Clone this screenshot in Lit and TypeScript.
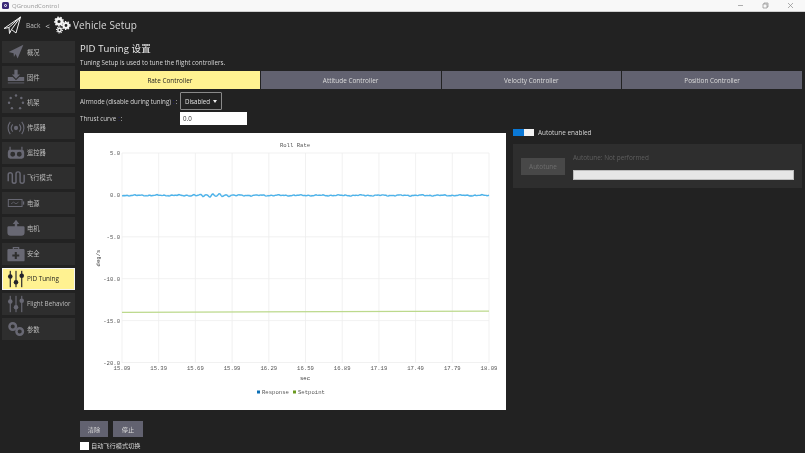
import { LitElement, html, css, svg } from "lit";
import { customElement } from "lit/decorators.js";

function blueLine(): string {
  const pts: string[] = [];
  for (let px = 38; px <= 405; px += 1) {
    const t = px - 38;
    let v = 0.55 * Math.sin(t * 0.31) + 0.5 * Math.sin(t * 0.83 + 1) + 0.35 * Math.sin(t * 1.7 + 2);
    const burst = Math.exp(-Math.pow((px - 128) / 16, 2));
    v = v * 0.75 + burst * 2.1 * Math.sin(t * 0.95);
    pts.push(`${px},${(62.4 + v * 0.8).toFixed(2)}`);
  }
  return pts.join(" ");
}

const XL = ["15.09", "15.39", "15.69", "15.99", "16.29", "16.59", "16.89", "17.19", "17.49", "17.79", "18.09"];
const YL = ["5.0", "0.0", "-5.0", "-10.0", "-15.0", "-20.0"];

const ICONS: Record<string, unknown> = {
  plane: svg`<path d="M2 11 L20 2 L13 19 L10.5 13.5 L8.5 17 L8 12.5 Z"/>`,
  firmware: svg`<path d="M9 2h4v6h3l-5 5-5-5h3z"/><path d="M1 11h6l4 4 4-4h6v5H1z"/><path d="M1 17.500h20v1.400H1z" opacity=".7"/>`,
  airframe: svg`<g><circle cx="11" cy="3" r="1.500"/><circle cx="17.500" cy="6" r="1.500"/><circle cx="19.500" cy="12" r="1.500"/><circle cx="16" cy="18.500" r="1.500"/><circle cx="6" cy="18.500" r="1.500"/><circle cx="2.500" cy="12" r="1.500"/><circle cx="4.500" cy="6" r="1.500"/></g>`,
  sensors: svg`<circle cx="11" cy="11" r="2.6"/><g fill="none" stroke="currentColor" stroke-width="1.4"><path d="M7 6.5a7 7 0 0 0 0 9M15 6.5a7 7 0 0 1 0 9"/><path d="M4 3.5a12 12 0 0 0 0 15M18 3.5a12 12 0 0 1 0 15"/></g>`,
  rc: svg`<path fill-rule="evenodd" d="M4 7h14a3 3 0 0 1 3 3v5a3 3 0 0 1-3 3H4a3 3 0 0 1-3-3v-5a3 3 0 0 1 3-3zM7 9.5a3 3 0 1 0 0 6 3 3 0 0 0 0-6zM15 9.5a3 3 0 1 0 0 6 3 3 0 0 0 0-6z"/><path d="M3 3.5h1.5v4H3zM17.5 3.5H19v4h-1.500z"/>`,
  modes: svg`<path fill="none" stroke="currentColor" stroke-width="1.8" d="M1.500 15V7a2.500 2.500 0 0 1 5 0v9a2.500 2.500 0 0 0 4.500 0V6a2.500 2.500 0 0 1 5 0v9a2.500 2.500 0 0 0 5 0V7"/>`,
  battery: svg`<path fill-rule="evenodd" d="M1 6h18v10H1zM2.200 7.200v7.600h15.600V7.200z"/><path d="M19.500 9H21v4h-1.500z"/><path fill="none" stroke="currentColor" stroke-width=".9" d="M5 12l3-2 3 2 3-2"/>`,
  motor: svg`<path d="M11 1l4 5h-2.500v3H20a1.500 1.500 0 0 1 1.500 1.500v6a4 4 0 0 1-4 4h-13a4 4 0 0 1-4-4v-6A1.500 1.500 0 0 1 2 9h7.500V6H7z"/>`,
  safety: svg`<path fill-rule="evenodd" d="M7 5V2.500h8V5h5a1.500 1.500 0 0 1 1.500 1.500v12A1.500 1.500 0 0 1 20 20H2a1.500 1.500 0 0 1-1.500-1.500v-12A1.500 1.500 0 0 1 2 5zM8.500 5h5V4h-5zM9.500 8.500v3h-3v2.500h3v3H12v-3h3v-2.500h-3v-3z"/>`,
  sliders: svg`<g><rect x="3.300" y="1" width="1.400" height="20"/><rect x="10.300" y="1" width="1.400" height="20"/><rect x="17.300" y="1" width="1.400" height="20"/><circle cx="4" cy="8" r="2.800"/><circle cx="11" cy="15" r="2.800"/><circle cx="18" cy="7" r="2.800"/></g>`,
  params: svg`<g fill="none" stroke="currentColor" stroke-width="3"><circle cx="7" cy="8" r="4"/><circle cx="15.500" cy="14" r="4"/></g>`,
};

const ITEMS = [
  ["plane", "概况"], ["firmware", "固件"], ["airframe", "机架"], ["sensors", "传感器"],
  ["rc", "遥控器"], ["modes", "飞行模式"], ["battery", "电源"], ["motor", "电机"],
  ["safety", "安全"], ["sliders", "PID Tuning"], ["sliders", "Flight Behavior"], ["params", "参数"],
];

@customElement("app-root")
export class AppRoot extends LitElement {
  static styles = css`
    :host { display: block; width: 805px; height: 453px; overflow: hidden; }
    * { box-sizing: border-box; }
    .app { width: 805px; height: 453px; background: #222222; color: #e4e4e4; display: flex; flex-direction: column;
      font-family: "Open Sans", "Noto Sans CJK SC", sans-serif; overflow: hidden; filter: blur(.3px); }
    .titlebar { height: 12px; background: #f8f8f8; display: flex; align-items: center; padding-left: 2px; gap: 3px;
      color: #9a9a9a; font-size: 6px; border-bottom: 1px solid #cfcfcf; flex: none; }
    .logo { width: 7px; height: 7px; background: #3b2a78; border-radius: 1.500px; display: flex; align-items: center; justify-content: center; }
    .logo i { width: 3px; height: 3px; border: 1px solid #fff; border-radius: 50%; }
    .winbtns { margin-left: auto; display: flex; gap: 18px; padding-right: 11px; align-items: center; }
    .winbtns svg { width: 7px; height: 7px; display: block; fill: none; stroke: #8c8c8c; stroke-width: .7; }
    .header { height: 26px; flex: none; display: flex; align-items: center; padding-left: 3px; color: #d8d8d8; }
    .header .plane { width: 19px; height: 19px; display: block; fill: none; stroke: #f0f0f0; stroke-width: 1; }
    .back { font-size: 6.500px; margin-left: 4px; color: #bdbdbd; }
    .lt { font-size: 8px; margin-left: 5px; }
    .gears { width: 18px; height: 18px; margin-left: 3px; display: block; }
    .vs { font-size: 10px; margin-left: 2px; letter-spacing: .1px; }
    .main { flex: 1; display: flex; min-height: 0; }
    .side { width: 80px; flex: none; padding: 3px 0 0 2px; display: flex; flex-direction: column; gap: 3.200px; }
    .item { width: 73px; height: 22px; flex: none; background: #2e2e2e; display: flex; align-items: center; padding-left: 4px;
      color: #bcbcbc; font-size: 6.300px; gap: 1px; white-space: nowrap; }
    .item svg { width: 20px; height: 18px; fill: #686873; color: #686873; flex: none; }
    .item.sel { background: #fff291; color: #1e1e1e; border: 1px solid #f4f4f4; padding-left: 3px; }
    .item.sel svg { fill: #23232b; color: #23232b; }
    .content { flex: 1; min-width: 0; display: flex; flex-direction: column; }
    h1 { margin: 3px 0 0; font-size: 9.500px; font-weight: 400; height: 15px; line-height: 15px; color: #e8e8e8; letter-spacing: .1px; }
    .desc { font-size: 6.250px; height: 10px; line-height: 10px; margin-top: 2px; color: #d8d8d8; }
    .tabs { display: flex; gap: 1px; width: 722px; height: 18px; margin-top: 3px; flex: none; }
    .tab { flex: 1; background: #626270; color: #dcdcdc; font-size: 6.400px; display: flex; align-items: center; justify-content: center; }
    .tab.sel { background: #fff291; color: #222; }
    .lower { flex: 1; display: flex; gap: 7px; min-height: 0; }
    .left { width: 426px; flex: none; display: flex; flex-direction: column; padding-top: 3px; }
    .row { display: flex; align-items: center; font-size: 6.200px; color: #d4d4d4; }
    .row2 { margin-top: 2px; }
    .lbl { width: 100px; flex: none; white-space: nowrap; }
    .lbl b { color: #1a1a8a; font-weight: 400; margin: 0 1px 0 2px; }
    .select { width: 42px; height: 18px; border: 1px solid #8a8a8a; border-radius: 1px; background: #222; display: flex; align-items: center;
      justify-content: space-between; padding: 0 4px; color: #e0e0e0; }
    .caret { width: 0; height: 0; border: 2.500px solid transparent; border-top: 3px solid #eee; border-bottom: 0; }
    .input { width: 67px; height: 13px; background: #fff; color: #333; display: flex; align-items: center; padding-left: 3px; }
    .chart { width: 422px; height: 277px; margin: 8px 0 0 4px; background: #fff; flex: none; }
    .chart svg { display: block; width: 422px; height: 277px; font-family: "Liberation Mono", monospace; }
    .btns { display: flex; gap: 5px; margin-top: 11px; }
    .btn { height: 16px; background: #626270; color: #d6d6d6; font-size: 6.200px; display: flex; align-items: center; justify-content: center; }
    .btn.clear { width: 28px; }
    .btn.stop { width: 30px; }
    .check { display: flex; align-items: center; gap: 2px; margin-top: 4px; font-size: 6.200px; color: #d4d4d4; }
    .box { width: 9px; height: 8px; background: #fff; }
    .right { width: 289px; flex: none; display: flex; flex-direction: column; padding-top: 39px; }
    .toggle-row { display: flex; align-items: center; gap: 4px; font-size: 6.400px; color: #d4d4d4; height: 8px; }
    .toggle { width: 21px; height: 7px; display: flex; }
    .toggle i { flex: 1; background: #0a78d6; }
    .toggle u { flex: 1; background: #f2f2f2; }
    .panel { height: 44px; margin-top: 8px; background: #2e2e2e; display: flex; padding: 0 8px; gap: 8px; align-items: flex-start; }
    .auto { width: 44px; height: 17px; margin-top: 14px; background: #484848; color: #6e6e6e; font-size: 6.400px; display: flex; align-items: center; justify-content: center; flex: none; }
    .pcol { flex: 1; display: flex; flex-direction: column; }
    .status { font-size: 6.400px; color: #5f5f5f; height: 10px; line-height: 10px; margin-top: 9px; }
    .bar { height: 10px; margin-top: 7px; background: #e6e6e6; border: 1px solid #bdbdbd; }
  `;

  private chart() {
    const xs = XL.map((_, i) => 38 + (367 * i) / 10);
    const ys = YL.map((_, i) => 20 + 41.900 * i);
    return svg`<svg viewBox="0 0 422 277">
      <g stroke="#eeeeee" stroke-width=".8">
        ${xs.map((x) => svg`<line x1=${x} x2=${x} y1="20" y2="230"/>`)}
        ${ys.map((y) => svg`<line x1="38" x2="405" y1=${y} y2=${y}/>`)}
      </g>
      <g fill="#555" font-size="5.600">
        ${YL.map((l, i) => svg`<text x="36" y=${ys[i] + 2} text-anchor="end">${l}</text>`)}
        ${XL.map((l, i) => svg`<text x=${xs[i]} y="237" text-anchor="middle">${l}</text>`)}
        <text x="211" y="14" text-anchor="middle">Roll Rate</text>
        <text x="221" y="246.500" text-anchor="middle" fill="#333">sec</text>
        <text transform="translate(15.500 125) rotate(-90)" text-anchor="middle" fill="#333">deg/s</text>
        <rect x="173" y="257.500" width="3" height="3" fill="#0b6fb5"/>
        <text x="178" y="261">Response</text>
        <rect x="209" y="257.500" width="3" height="3" fill="#6a9a1f"/>
        <text x="214" y="261">Setpoint</text>
      </g>
      <polyline points=${blueLine()} fill="none" stroke="#4db3ea" stroke-width="1.400"/>
      <path d="M38 179.300 C120 180 220 178.800 405 178.200" fill="none" stroke="#bcd98c" stroke-width="1.300"/>
    </svg>`;
  }

  render() {
    return html`<div class="app">
      <div class="titlebar">
        <span class="logo"><i></i></span><span>QGroundControl</span>
        <div class="winbtns">
          <svg viewBox="0 0 7 7"><path d="M1 3.500h5"/></svg>
          <svg viewBox="0 0 7 7"><path d="M1 2h4v4H1zM2 2V1h4v4H5"/></svg>
          <svg viewBox="0 0 7 7"><path d="M1 1l5 5M6 1l-5 5"/></svg>
        </div>
      </div>
      <div class="header">
        <svg class="plane" viewBox="0 0 19 19"><path d="M1 12.500 L17.500 1 L13 17 L8.500 13.500 L6.500 17.500 L6 11.500 Z M6 11.500 L17.500 1 M8.500 13.500 L17.500 1"/></svg>
        <span class="back">Back</span><span class="lt">&lt;</span>
        <svg class="gears" viewBox="0 0 18 18" fill="none" stroke="#f4f4f4">
          <circle cx="6" cy="5.500" r="2.800" stroke-width="2.400"/>
          <circle cx="6" cy="5.500" r="4.300" stroke-width="1.500" stroke-dasharray="1.500 1.500"/>
          <circle cx="13" cy="9.500" r="2.500" stroke-width="2.200"/>
          <circle cx="13" cy="9.500" r="3.900" stroke-width="1.400" stroke-dasharray="1.400 1.400"/>
          <circle cx="6.500" cy="14" r="1.700" stroke-width="1.500"/>
          <circle cx="6.500" cy="14" r="2.900" stroke-width="1.100" stroke-dasharray="1.100 1.100"/>
        </svg>
        <span class="vs">Vehicle Setup</span>
      </div>
      <div class="main">
        <div class="side">
          ${ITEMS.map(([ic, t]) => html`<div class="item ${t === "PID Tuning" ? "sel" : ""}">
            <svg viewBox="0 0 22 22">${ICONS[ic]}</svg><span>${t}</span></div>`)}
        </div>
        <div class="content">
          <h1>PID Tuning 设置</h1>
          <div class="desc">Tuning Setup is used to tune the flight controllers.</div>
          <div class="tabs">
            <div class="tab sel">Rate Controller</div>
            <div class="tab">Attitude Controller</div>
            <div class="tab">Velocity Controller</div>
            <div class="tab">Position Controller</div>
          </div>
          <div class="lower">
            <div class="left">
              <div class="row"><span class="lbl">Airmode (disable during tuning)<b>:</b>:</span>
                <div class="select"><span>Disabled</span><span class="caret"></span></div></div>
              <div class="row row2"><span class="lbl">Thrust curve<b>:</b>:</span>
                <div class="input">0.0</div></div>
              <div class="chart">${this.chart()}</div>
              <div class="btns">
                <div class="btn clear">清除</div>
                <div class="btn stop">停止</div>
              </div>
              <div class="check"><span class="box"></span><span>自动飞行模式切换</span></div>
            </div>
            <div class="right">
              <div class="toggle-row"><div class="toggle"><i></i><u></u></div><span>Autotune enabled</span></div>
              <div class="panel">
                <div class="auto">Autotune</div>
                <div class="pcol"><div class="status">Autotune: Not performed</div><div class="bar"></div></div>
              </div>
            </div>
          </div>
        </div>
      </div>
    </div>`;
  }
}
